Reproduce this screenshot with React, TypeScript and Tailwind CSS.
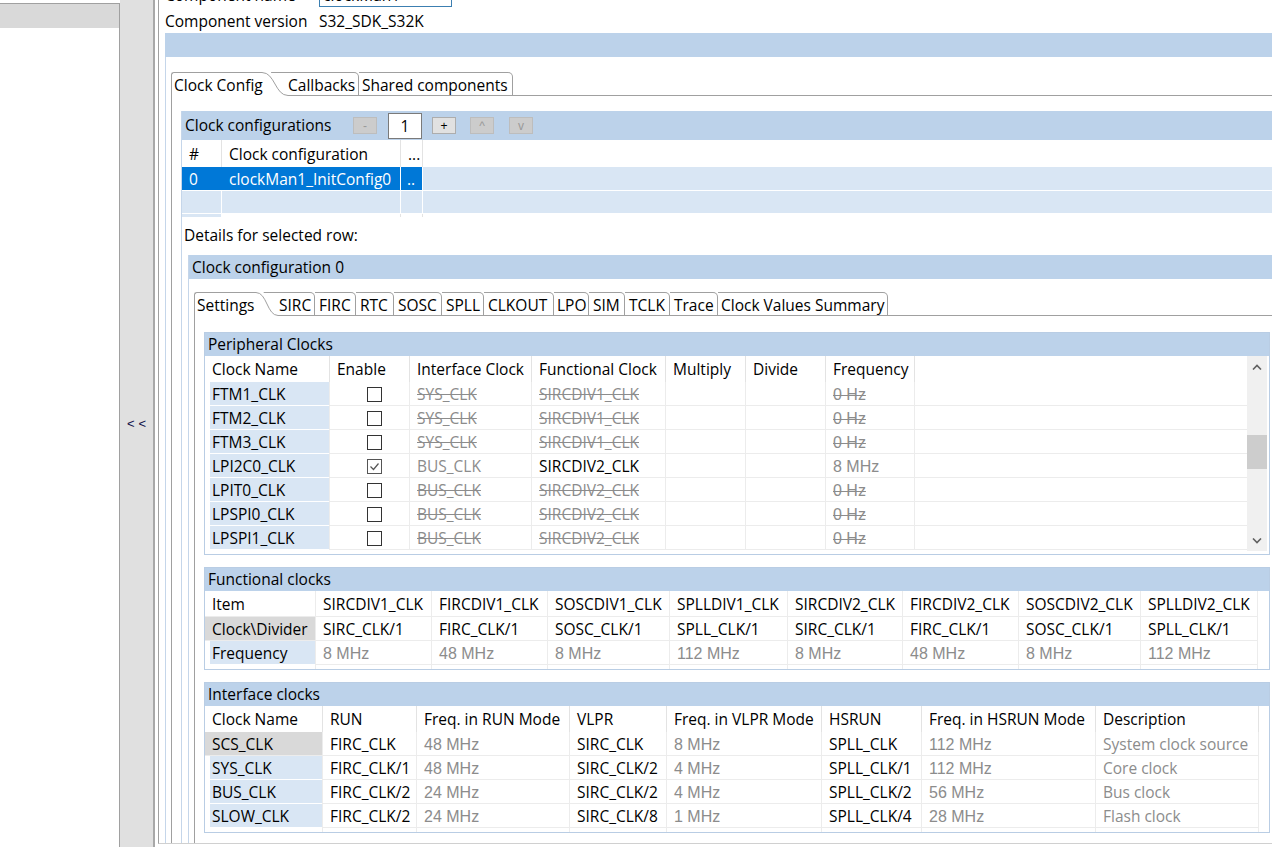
import React from 'react';

const F = "font-['Open_Sans','Noto_Sans',sans-serif]";
const A = "font-['Liberation_Sans',Arial,sans-serif] text-[16px]";
const BAND = 'bg-[#bcd2ea]';
const LB = 'bg-[#d9e6f4]';
const GRAY = 'text-[#8c8c8c]';
const STRIKE = 'text-[#8c8c8c] line-through decoration-[#8c8c8c]';

function Curve({ w }: { w: number }) {
  const h = w / 2;
  return (
    <svg width={w} height={24} className="block shrink-0">
      <path d={`M0 0.5 C ${h} 0.5, ${h} 23.5, ${w} 23.5`} fill="none" stroke="#a0a0a0" />
      <path d={`M${w * 0.35} 0.5 H${w}`} fill="none" stroke="#a0a0a0" />
    </svg>
  );
}

function Tab({ label, w, pl }: { label: string; w: string; pl: string }) {
  return (
    <div
      className={`${w} ${pl} h-[24px] pt-[3px] shrink-0 flex items-center whitespace-nowrap overflow-hidden border-t border-r border-b border-[#a0a0a0] rounded-tr-[5px]`}
    >
      {label}
    </div>
  );
}

function Panel({ title, children }: { title: string; children: React.ReactNode }) {
  return (
    <div className="w-[1066px] border border-[#b9cde4]">
      <div className={`h-[23px] ${BAND} flex items-center pl-[3px]`}>{title}</div>
      {children}
    </div>
  );
}

function Checkbox({ checked }: { checked: boolean }) {
  return (
    <div className={`w-[15px] h-[15px] border ${checked ? 'border-[#555]' : 'border-[#333]'} bg-white`}>
      {checked && (
        <svg width="13" height="13" className="block">
          <path d="M2.5 6.5 L5.5 9.5 L10.5 3.5" fill="none" stroke="#555" strokeWidth="1.2" />
        </svg>
      )}
    </div>
  );
}

function Chevron({ up }: { up: boolean }) {
  return (
    <svg width="10" height="6" className="block">
      <path d={up ? 'M1 5.5 L5 1.5 L9 5.5' : 'M1 0.5 L5 4.5 L9 0.5'} fill="none" stroke="#606060" strokeWidth="1.6" />
    </svg>
  );
}

const PW = ['w-[125px]', 'w-[80px]', 'w-[122px]', 'w-[134px]', 'w-[80px]', 'w-[80px]', 'w-[89px]'];
const PH = ['Clock Name', 'Enable', 'Interface Clock', 'Functional Clock', 'Multiply', 'Divide', 'Frequency'];

const periph: [string, boolean, string, string, string][] = [
  ['FTM1_CLK', false, 'SYS_CLK', 'SIRCDIV1_CLK', '0 Hz'],
  ['FTM2_CLK', false, 'SYS_CLK', 'SIRCDIV1_CLK', '0 Hz'],
  ['FTM3_CLK', false, 'SYS_CLK', 'SIRCDIV1_CLK', '0 Hz'],
  ['LPI2C0_CLK', true, 'BUS_CLK', 'SIRCDIV2_CLK', '8 MHz'],
  ['LPIT0_CLK', false, 'BUS_CLK', 'SIRCDIV2_CLK', '0 Hz'],
  ['LPSPI0_CLK', false, 'BUS_CLK', 'SIRCDIV2_CLK', '0 Hz'],
  ['LPSPI1_CLK', false, 'BUS_CLK', 'SIRCDIV2_CLK', '0 Hz'],
];

const FW = ['w-[111px]', 'w-[116px]', 'w-[116px]', 'w-[122px]', 'w-[118px]', 'w-[115px]', 'w-[116px]', 'w-[122px]', 'w-[117px]'];
const fItems = ['SIRCDIV1_CLK', 'FIRCDIV1_CLK', 'SOSCDIV1_CLK', 'SPLLDIV1_CLK', 'SIRCDIV2_CLK', 'FIRCDIV2_CLK', 'SOSCDIV2_CLK', 'SPLLDIV2_CLK'];
const fDiv = ['SIRC_CLK/1', 'FIRC_CLK/1', 'SOSC_CLK/1', 'SPLL_CLK/1', 'SIRC_CLK/1', 'FIRC_CLK/1', 'SOSC_CLK/1', 'SPLL_CLK/1'];
const fFreq = ['8 MHz', '48 MHz', '8 MHz', '112 MHz', '8 MHz', '48 MHz', '8 MHz', '112 MHz'];

const IW = ['w-[118px]', 'w-[94px]', 'w-[153px]', 'w-[97px]', 'w-[155px]', 'w-[100px]', 'w-[174px]', 'w-[163px]'];
const IH = ['Clock Name', 'RUN', 'Freq. in RUN Mode', 'VLPR', 'Freq. in VLPR Mode', 'HSRUN', 'Freq. in HSRUN Mode', 'Description'];
const iRows = [
  ['SCS_CLK', 'FIRC_CLK', '48 MHz', 'SIRC_CLK', '8 MHz', 'SPLL_CLK', '112 MHz', 'System clock source'],
  ['SYS_CLK', 'FIRC_CLK/1', '48 MHz', 'SIRC_CLK/2', '4 MHz', 'SPLL_CLK/1', '112 MHz', 'Core clock'],
  ['BUS_CLK', 'FIRC_CLK/2', '24 MHz', 'SIRC_CLK/2', '4 MHz', 'SPLL_CLK/2', '56 MHz', 'Bus clock'],
  ['SLOW_CLK', 'FIRC_CLK/2', '24 MHz', 'SIRC_CLK/8', '1 MHz', 'SPLL_CLK/4', '28 MHz', 'Flash clock'],
];

const cell = 'h-full shrink-0 flex items-center pl-[7px] pt-[2px] border-r border-b border-[#ececec] whitespace-nowrap overflow-hidden';
const hcell = 'h-full shrink-0 flex items-center pl-[7px] pt-[2px] border-r border-[#e3e3e3] whitespace-nowrap overflow-hidden';
const fcell = 'h-full flex items-center pl-[2px] pt-[2px] border-b border-white';

function SmallBtn({ children, dis }: { children: React.ReactNode; dis?: boolean }) {
  return (
    <div
      className={`w-[24px] h-[17px] shrink-0 flex items-center justify-center text-[12px] leading-none border font-['Liberation_Sans',Arial,sans-serif] ${
        dis ? 'bg-[#cccccc] border-[#bdbdbd] text-[#9a9a9a]' : 'bg-[#e1e1e1] border-[#adadad] text-black'
      }`}
    >
      {children}
    </div>
  );
}

export default function App() {
  return (
    <div className={`${F} text-[15.5px] leading-none text-black w-[1272px] h-[847px] overflow-hidden bg-white flex`}>
      {/* left tree panel */}
      <div className="w-[120px] shrink-0 h-full pt-[3px]">
        <div className="h-full border-t border-r border-[#a0a0a0]">
          <div className="h-[24px] bg-[#d9d9d9]" />
        </div>
      </div>
      {/* collapse strip */}
      <div className="w-[35px] shrink-0 h-full bg-[#e0e0e0] border-r-2 border-[#a8a8a8] flex items-center justify-center">
        <span className="font-['Liberation_Sans',Arial,sans-serif] text-[13px] tracking-[4px] pl-[4px] text-[#10104a]">&lt;&lt;</span>
      </div>
      <div className="w-[3px] shrink-0" />

      {/* main editor area */}
      <div className="flex-1 min-w-0 h-[844px] border-l border-b border-l-[#a0a0a0] border-b-[#d0d0d0] overflow-hidden pl-[6px]">
        <div className="h-[22px] -mt-[15px] flex items-center">
          <div className="w-[154px] shrink-0">Component name</div>
          <div className="h-[22px] w-[133px] border border-[#3c7fb1] flex items-center pl-[3px]">clockMan1</div>
        </div>
        <div className="h-[26px] pt-[4px] flex items-center">
          <div className="w-[154px] shrink-0">Component version</div>
          <div>S32_SDK_S32K</div>
        </div>
        <div className={`h-[24px] ${BAND}`} />

        <div className="border-l border-[#c5d6ea] pl-[5px] pt-[15px]">
          {/* outer tabs */}
          <div className="flex h-[24px]">
            <div className="w-[91px] h-[24px] pt-[3px] shrink-0 flex items-center pl-[2px] border-t border-l border-[#a0a0a0] rounded-tl-[3px] whitespace-nowrap">
              Clock Config
            </div>
            <Curve w={26} />
            <Tab label="Callbacks" w="w-[71px]" pl="pl-0" />
            <Tab label="Shared components" w="w-[154px]" pl="pl-[3px]" />
            <div className="flex-1 border-b border-[#a0a0a0]" />
          </div>

          <div className="border-l border-[#a0a0a0] pl-[9px] pt-[15px]">
            <div className="border-l border-[#c5d6ea]">
              {/* Clock configurations header */}
              <div className={`h-[29px] ${BAND} flex items-center pl-[3px]`}>
                <div className="w-[168px] shrink-0">Clock configurations</div>
                <SmallBtn dis>-</SmallBtn>
                <div className="ml-[11px] w-[34px] h-[26px] shrink-0 bg-white border border-[#7a7a7a] flex items-center justify-center pt-[2px]">
                  1
                </div>
                <div className="ml-[10px]">
                  <SmallBtn>+</SmallBtn>
                </div>
                <div className="ml-[14px]">
                  <SmallBtn dis>^</SmallBtn>
                </div>
                <div className="ml-[15px]">
                  <SmallBtn dis>v</SmallBtn>
                </div>
              </div>
              {/* config table */}
              <div className="h-[27px] flex">
                <div className={`${hcell} w-[40px]`}>#</div>
                <div className={`${hcell} w-[179px]`}>Clock configuration</div>
                <div className={`${hcell} w-[22px] pl-[6px]`}>...</div>
                <div className="flex-1" />
              </div>
              <div className="h-[23px] flex text-white">
                <div className="h-full w-[40px] shrink-0 bg-[#0078d7] flex items-center pl-[7px] pt-[2px]">0</div>
                <div className="h-full w-[179px] shrink-0 bg-[#0078d7] border-r border-white flex items-center pl-[7px] pt-[2px]">
                  clockMan1_InitConfig0
                </div>
                <div className="h-full w-[22px] shrink-0 bg-[#0078d7] border-r border-white flex items-center pl-[6px] pt-[2px]">..</div>
                <div className={`flex-1 ${LB}`} />
              </div>
              <div className="h-[23px] flex border-t border-white">
                <div className={`h-full w-[40px] shrink-0 ${LB} border-r border-white`} />
                <div className={`h-full w-[179px] shrink-0 ${LB} border-r border-white`} />
                <div className={`h-full w-[22px] shrink-0 ${LB} border-r border-white`} />
                <div className={`flex-1 ${LB}`} />
              </div>
              <div className="h-[4px] flex border-t border-white">
                <div className={`h-full w-[40px] shrink-0 ${LB} border-r border-white`} />
                <div className="h-full w-[179px] shrink-0 border-r border-[#e3e3e3]" />
                <div className="h-full w-[22px] shrink-0 border-r border-[#e3e3e3]" />
                <div className="flex-1" />
              </div>

              <div className="h-[38px] flex items-center pl-[2px]">Details for selected row:</div>

              {/* Clock configuration 0 */}
              <div className="ml-[6px] border-l border-[#c5d6ea]">
                <div className={`h-[24px] ${BAND} flex items-center pl-[3px] pt-[1px]`}>Clock configuration 0</div>
                <div className="pl-[5px] pt-[13px]">
                  {/* inner tabs */}
                  <div className="flex h-[24px]">
                    <div className="w-[62px] h-[24px] pt-[3px] shrink-0 flex items-center pl-[2px] border-t border-l border-[#a0a0a0] rounded-tl-[3px] whitespace-nowrap">
                      Settings
                    </div>
                    <Curve w={22} />
                    <Tab label="SIRC" w="w-[37px]" pl="pl-[1px]" />
                    <Tab label="FIRC" w="w-[41px]" pl="pl-[4px]" />
                    <Tab label="RTC" w="w-[38px]" pl="pl-[4px]" />
                    <Tab label="SOSC" w="w-[48px]" pl="pl-[4px]" />
                    <Tab label="SPLL" w="w-[42px]" pl="pl-[4px]" />
                    <Tab label="CLKOUT" w="w-[70px]" pl="pl-[4px]" />
                    <Tab label="LPO" w="w-[35px]" pl="pl-[3px]" />
                    <Tab label="SIM" w="w-[36px]" pl="pl-[4px]" />
                    <Tab label="TCLK" w="w-[45px]" pl="pl-[4px]" />
                    <Tab label="Trace" w="w-[48px]" pl="pl-[4px]" />
                    <Tab label="Clock Values Summary" w="w-[170px]" pl="pl-[3px]" />
                    <div className="flex-1 border-b border-[#a0a0a0]" />
                  </div>

                  <div className="border-l border-[#a0a0a0] pl-[9px] pt-[16px] pb-[20px]">
                    {/* Peripheral Clocks */}
                    <Panel title="Peripheral Clocks">
                      <div className="flex">
                        <div className="flex-1 min-w-0">
                          <div className="h-[26px] flex">
                            {PH.map((h, i) => (
                              <div key={h} className={`${hcell} ${PW[i]}`}>
                                {h}
                              </div>
                            ))}
                            <div className="flex-1" />
                          </div>
                          {periph.map(([name, en, ifc, fc, fr]) => (
                            <div key={name} className="h-[24px] flex">
                              <div className={`h-full shrink-0 ${PW[0]} pl-[5px] border-r border-[#ececec]`}>
                                <div className={`${fcell} ${LB}`}>{name}</div>
                              </div>
                              <div className={`${cell} ${PW[1]} pl-[37px] pt-0`}>
                                <Checkbox checked={en} />
                              </div>
                              <div className={`${cell} ${PW[2]}`}>
                                <span className={en ? GRAY : STRIKE}>{ifc}</span>
                              </div>
                              <div className={`${cell} ${PW[3]}`}>
                                <span className={en ? 'text-black' : STRIKE}>{fc}</span>
                              </div>
                              <div className={`${cell} ${PW[4]}`} />
                              <div className={`${cell} ${PW[5]}`} />
                              <div className={`${cell} ${PW[6]}`}>
                                <span className={`${A} ${en ? GRAY : STRIKE}`}>{fr}</span>
                              </div>
                              <div className="flex-1 h-full border-b border-[#ececec]" />
                            </div>
                          ))}
                          <div className="h-[4px]" />
                        </div>
                        <div className="w-[20px] h-[195px] shrink-0 bg-[#f0f0f0] flex flex-col">
                          <div className="h-[21px] flex items-center justify-center">
                            <Chevron up />
                          </div>
                          <div className="flex-1">
                            <div className="mt-[58px] h-[34px] bg-[#cdcdcd]" />
                          </div>
                          <div className="h-[21px] flex items-center justify-center">
                            <Chevron up={false} />
                          </div>
                        </div>
                        <div className="w-[2px] shrink-0" />
                      </div>
                    </Panel>

                    {/* Functional clocks */}
                    <div className="mt-[12px]">
                      <Panel title="Functional clocks">
                        <div className="h-[26px] flex">
                          <div className={`${cell} ${FW[0]}`}>Item</div>
                          {fItems.map((t, i) => (
                            <div key={t} className={`${cell} ${FW[i + 1]}`}>
                              {t}
                            </div>
                          ))}
                          <div className="flex-1" />
                        </div>
                        <div className="h-[24px] flex">
                          <div className={`${cell} ${FW[0]} bg-[#d9d9d9]`}>Clock\Divider</div>
                          {fDiv.map((t, i) => (
                            <div key={i} className={`${cell} ${FW[i + 1]}`}>
                              {t}
                            </div>
                          ))}
                          <div className="flex-1" />
                        </div>
                        <div className="h-[24px] flex">
                          <div className={`h-full shrink-0 ${FW[0]} pl-[5px] border-r border-[#ececec]`}>
                            <div className={`${fcell} ${LB}`}>Frequency</div>
                          </div>
                          {fFreq.map((t, i) => (
                            <div key={i} className={`${cell} ${FW[i + 1]}`}>
                              <span className={`${A} ${GRAY}`}>{t}</span>
                            </div>
                          ))}
                          <div className="flex-1" />
                        </div>
                        <div className="h-[4px] flex">
                          {FW.map((w, i) => (
                            <div key={i} className={`h-full shrink-0 ${w} border-r border-[#ececec]`} />
                          ))}
                        </div>
                      </Panel>
                    </div>

                    {/* Interface clocks */}
                    <div className="mt-[12px]">
                      <Panel title="Interface clocks">
                        <div className="h-[26px] flex">
                          {IH.map((h, i) => (
                            <div key={h} className={`${hcell} ${IW[i]}`}>
                              {h}
                            </div>
                          ))}
                          <div className="flex-1" />
                        </div>
                        {iRows.map((r, ri) => (
                          <div key={r[0]} className="h-[24px] flex">
                            {ri === 0 ? (
                              <div className={`${cell} ${IW[0]} bg-[#d9d9d9]`}>{r[0]}</div>
                            ) : (
                              <div className={`h-full shrink-0 ${IW[0]} pl-[5px] border-r border-[#ececec]`}>
                                <div className={`${fcell} ${LB}`}>{r[0]}</div>
                              </div>
                            )}
                            {r.slice(1).map((t, i) => {
                              const idx = i + 1;
                              const isFreq = idx === 2 || idx === 4 || idx === 6;
                              const isDesc = idx === 7;
                              return (
                                <div key={idx} className={`${cell} ${IW[idx]}`}>
                                  <span className={isFreq ? `${A} ${GRAY}` : isDesc ? GRAY : ''}>{t}</span>
                                </div>
                              );
                            })}
                            <div className="flex-1" />
                          </div>
                        ))}
                        <div className="h-[4px] flex">
                          {IW.map((w, i) => (
                            <div key={i} className={`h-full shrink-0 ${w} border-r border-[#ececec]`} />
                          ))}
                        </div>
                      </Panel>
                    </div>
                  </div>
                </div>
              </div>
            </div>
          </div>
        </div>
      </div>
    </div>
  );
}
